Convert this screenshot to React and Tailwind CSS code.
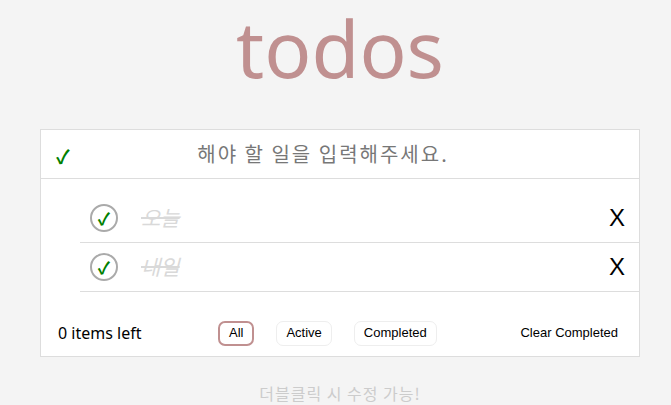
const todos = [
  { id: 1, text: '오늘', done: true },
  { id: 2, text: '내일', done: true },
]

const filters = ['All', 'Active', 'Completed']

function Check({ size = 'text-[19px]' }) {
  return <span className={'text-[#008000] font-bold leading-none ' + size}>✓</span>
}

export default function App() {
  return (
    <div
      className="min-h-[405px] bg-[#f4f4f4] pl-[9px]"
      style={{ fontFamily: '"Noto Sans", "Noto Sans CJK KR", sans-serif' }}
    >
      <div className="mx-auto w-[600px]">
        <h1 className="h-[129px] text-center text-[78px] leading-[96px] text-[#c09090] font-normal">
          todos
        </h1>
        <div className="bg-white border border-[#dddddd]">
          <div className="flex items-center h-[49px] border-b border-[#dddddd]">
            <div className="w-[36px] pl-[15px] pt-[8px]">
              <Check />
            </div>
            <input
              className="flex-1 mr-[70px] text-center text-[20px] tracking-[2px] outline-none placeholder:text-[#777777] bg-transparent"
              style={{ fontFamily: '"Noto Sans CJK KR", sans-serif' }}
              placeholder="해야 할 일을 입력해주세요."
            />
          </div>
          <ul className="pt-[15px] pl-[39px]">
            {todos.map((t) => (
              <li key={t.id} className="flex items-center h-[49px] border-b border-[#dddddd]">
                <span className="ml-[10px] flex items-center justify-center w-[28px] h-[28px] rounded-full border-2 border-[#aaaaaa]">
                  <Check size="text-[17px]" />
                </span>
                <span
                  className="ml-[23px] flex-1 text-[21px] italic line-through text-[#d9d9d9]"
                  style={{ fontFamily: '"Noto Sans CJK KR", sans-serif' }}
                >
                  {t.text}
                </span>
                <button className="mr-[14px] text-[24px] leading-none text-black" style={{ fontFamily: '"Liberation Sans", sans-serif' }}>
                  X
                </button>
              </li>
            ))}
          </ul>
          <div className="flex items-center h-[64px] pt-[18px] pl-[17px] pr-[21px]">
            <span className="w-[160px] text-[16px] text-black">0 items left</span>
            <div className="flex gap-[22px]" style={{ fontFamily: '"Liberation Sans", sans-serif' }}>
              {filters.map((f) => (
                <button
                  key={f}
                  className={
                    f === 'All'
                      ? 'h-[25px] px-[9px] rounded-[7px] border-2 border-[#c09090] text-[13px] text-black'
                      : 'h-[25px] px-[9px] rounded-[7px] border border-[#eeeeee] text-[13px] text-black'
                  }
                >
                  {f}
                </button>
              ))}
            </div>
            <button className="ml-auto text-[13px] text-black" style={{ fontFamily: '"Liberation Sans", sans-serif' }}>
              Clear Completed
            </button>
          </div>
        </div>
        <p
          className="mt-[24px] text-center text-[16px] tracking-[1px] text-[#cccccc]"
          style={{ fontFamily: '"Noto Sans CJK KR", sans-serif' }}
        >
          더블클릭 시 수정 가능!
        </p>
      </div>
    </div>
  )
}
